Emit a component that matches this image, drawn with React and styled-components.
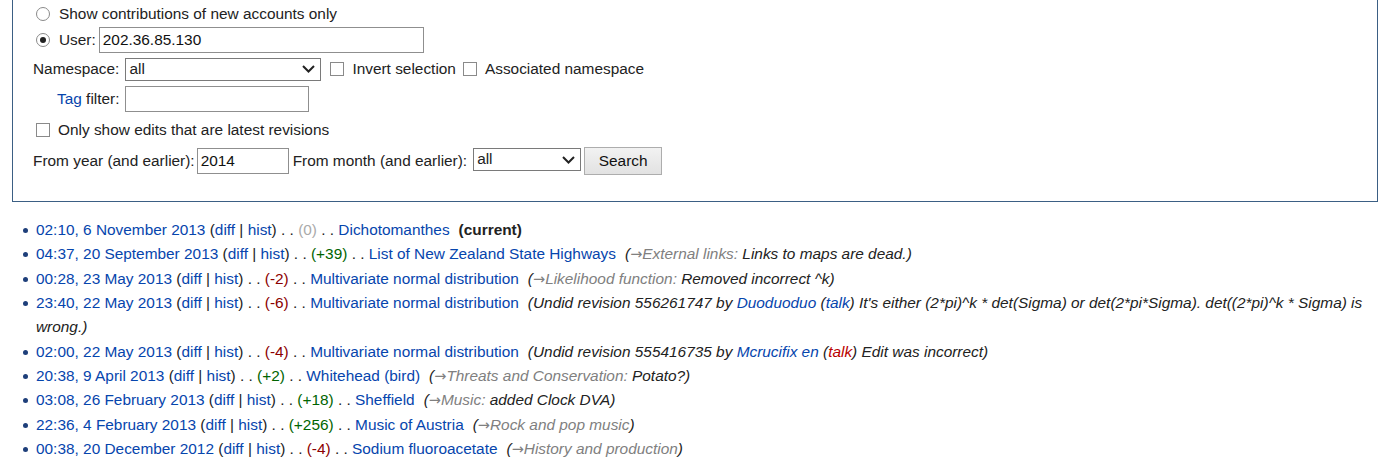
import React from "react";
import styled, { createGlobalStyle } from "styled-components";

const GlobalStyle = createGlobalStyle`
  body {
    margin: 0;
    background: #fff;
    color: #222;
    font-family: "Liberation Sans", Arial, sans-serif;
    font-size: 15.4px;
  }
`;

const Page = styled.div`
  padding: 0 12px;
`;

const Fieldset = styled.div`
  border: 1px solid #3b5f84;
  border-top: none;
  padding: 3px 20px 26px;
`;

const Row = styled.div`
  display: flex;
  align-items: center;
  height: ${(p) => p.h || 22}px;
  margin-top: ${(p) => p.mt || 0}px;
  padding-left: ${(p) => p.indent || 0}px;
  white-space: nowrap;
`;

const Label = styled.span`
  margin-left: ${(p) => p.ml || 0}px;
  margin-right: ${(p) => p.gap ?? 4}px;
`;

const Radio = styled.span`
  box-sizing: border-box;
  width: 14px;
  height: 14px;
  border: 1px solid #8a8a8a;
  border-radius: 50%;
  margin-right: 9px;
  display: flex;
  align-items: center;
  justify-content: center;

  &::after {
    content: "";
    width: 6px;
    height: 6px;
    border-radius: 50%;
    background: ${(p) => (p.checked ? "#222" : "transparent")};
  }
`;

const Check = styled.span`
  box-sizing: border-box;
  width: 14px;
  height: 14px;
  border: 1px solid #8a8a8a;
  margin-left: ${(p) => p.ml || 0}px;
  margin-right: 8px;
`;

const TextBox = styled.div`
  box-sizing: border-box;
  width: ${(p) => p.w}px;
  height: 26px;
  border: 1px solid #8f8f8f;
  padding: 0 3px;
  display: flex;
  align-items: center;
  color: #111;
`;

const SelectBox = styled.div`
  box-sizing: border-box;
  width: ${(p) => p.w}px;
  height: 23px;
  border: 1px solid #7a7a7a;
  padding: 0 5px 0 3px;
  display: flex;
  align-items: flex-start;
  justify-content: space-between;
  line-height: 19px;
  margin-right: ${(p) => p.mr || 0}px;
  align-self: ${(p) => (p.top ? "flex-start" : "center")};
  margin-top: ${(p) => (p.top ? 1 : 0)}px;

  svg {
    align-self: center;
  }
`;

const Button = styled.div`
  box-sizing: border-box;
  width: 78px;
  height: 28px;
  border: 1px solid #adadad;
  background: linear-gradient(#f2f2f2, #e2e2e2);
  display: flex;
  align-items: center;
  justify-content: center;
  color: #111;
  align-self: flex-start;
`;

const Link = styled.a`
  color: ${(p) => (p.red ? "#ba0000" : "#0645ad")};
  text-decoration: none;
`;

const List = styled.ul`
  list-style: none;
  margin: 16px 0 0;
  padding: 0 0 0 24px;
`;

const Item = styled.li`
  position: relative;
  line-height: 24.33px;

  &::before {
    content: "";
    position: absolute;
    left: -13px;
    top: 10px;
    width: 5px;
    height: 5px;
    border-radius: 50%;
    background: #1e3f7a;
  }
`;

const Size = styled.span`
  color: ${(p) =>
    p.v > 0 ? "#006400" : p.v < 0 ? "#8b0000" : "#aaa"};
`;

const Current = styled.b`
  margin-left: 9px;
`;

const Comment = styled.i`
  margin-left: 9px;
`;

const Section = styled.span`
  color: #808080;
`;

const Arrow = styled.span`
  font-family: "DejaVu Sans", sans-serif;
  font-style: normal;
  font-size: 14.5px;
  line-height: 0;
`;

const Chevron = () => (
  <svg width="13" height="8" viewBox="0 0 13 8">
    <path d="M1 1l5.5 5.5L12 1" fill="none" stroke="#222" strokeWidth="2" />
  </svg>
);

const edits = [
  { time: "02:10, 6 November 2013", size: 0, page: "Dichotomanthes", current: true },
  {
    time: "04:37, 20 September 2013",
    size: 39,
    page: "List of New Zealand State Highways",
    section: "External links:",
    text: " Links to maps are dead.",
  },
  {
    time: "00:28, 23 May 2013",
    size: -2,
    page: "Multivariate normal distribution",
    section: "Likelihood function:",
    text: " Removed incorrect ^k",
  },
  {
    time: "23:40, 22 May 2013",
    size: -6,
    page: "Multivariate normal distribution",
    undid: "556261747",
    user: "Duoduoduo",
    text:
      " It's either (2*pi)^k * det(Sigma) or det(2*pi*Sigma). det((2*pi)^k * Sigma) is wrong.",
  },
  {
    time: "02:00, 22 May 2013",
    size: -4,
    page: "Multivariate normal distribution",
    undid: "555416735",
    user: "Mcrucifix en",
    redTalk: true,
    text: " Edit was incorrect",
  },
  {
    time: "20:38, 9 April 2013",
    size: 2,
    page: "Whitehead (bird)",
    section: "Threats and Conservation:",
    text: " Potato?",
  },
  {
    time: "03:08, 26 February 2013",
    size: 18,
    page: "Sheffield",
    section: "Music:",
    text: " added Clock DVA",
  },
  {
    time: "22:36, 4 February 2013",
    size: 256,
    page: "Music of Austria",
    section: "Rock and pop music",
  },
  {
    time: "00:38, 20 December 2012",
    size: -4,
    page: "Sodium fluoroacetate",
    section: "History and production",
  },
];

const EditItem = ({ e }) => (
  <Item>
    <Link>{e.time}</Link> (<Link>diff</Link> | <Link>hist</Link>) . .{" "}
    <Size v={e.size}>({e.size > 0 ? "+" + e.size : e.size})</Size> . .{" "}
    <Link>{e.page}</Link>
    {e.current && <Current>(current)</Current>}
    {e.section && (
      <Comment>
        (
        <Section>
          <Arrow>→</Arrow>
          {e.section}
        </Section>
        {e.text})
      </Comment>
    )}
    {e.undid && (
      <Comment>
        (Undid revision {e.undid} by <Link>{e.user}</Link> (
        <Link red={e.redTalk}>talk</Link>){e.text})
      </Comment>
    )}
  </Item>
);

export default function App() {
  return (
    <Page>
      <GlobalStyle />
      <Fieldset>
        <Row indent={3}>
          <Radio />
          <span>Show contributions of new accounts only</span>
        </Row>
        <Row indent={3} h={26} mt={2}>
          <Radio checked />
          <Label gap={3}>User:</Label>
          <TextBox w={325}>202.36.85.130</TextBox>
        </Row>
        <Row h={24} mt={4}>
          <Label gap={6}>Namespace:</Label>
          <SelectBox w={196} mr={9}>
            all
            <Chevron />
          </SelectBox>
          <Check />
          <span>Invert selection</span>
          <Check ml={7} />
          <span>Associated namespace</span>
        </Row>
        <Row indent={24} h={26} mt={5}>
          <Label gap={6}>
            <Link>Tag</Link> filter:
          </Label>
          <TextBox w={184} />
        </Row>
        <Row indent={3} mt={7}>
          <Check />
          <span>Only show edits that are latest revisions</span>
        </Row>
        <Row h={28} mt={6}>
          <Label gap={2}>From year (and earlier):</Label>
          <TextBox w={92}>2014</TextBox>
          <Label ml={4} gap={6}>
            From month (and earlier):
          </Label>
          <SelectBox w={108} mr={3} top>
            all
            <Chevron />
          </SelectBox>
          <Button>Search</Button>
        </Row>
      </Fieldset>
      <List>
        {edits.map((e, i) => (
          <EditItem key={i} e={e} />
        ))}
      </List>
    </Page>
  );
}
